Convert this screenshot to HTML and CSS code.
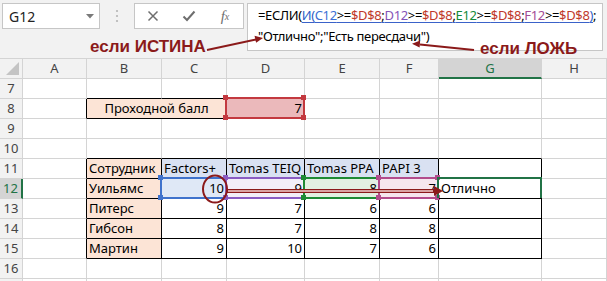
FILE: index.html
```html
<!DOCTYPE html>
<html>
<head>
  <title>ЕСЛИ и И</title>
  <link rel="stylesheet" href="styles.css">
</head>
<body>
  <div class="bar">
    <div class="name-box">
      <span>G12</span>
      <svg width="8" height="5" viewBox="0 0 8 5"><path d="M0 0h8L4 4.5z" fill="#7a7a7a"/></svg>
    </div>
    <div class="dots">
      <svg width="4" height="14" viewBox="0 0 4 14"><circle cx="2" cy="2" r="1.1" fill="#b5b5b5"/><circle cx="2" cy="7" r="1.1" fill="#b5b5b5"/><circle cx="2" cy="12" r="1.1" fill="#b5b5b5"/></svg>
    </div>
    <div class="fx-box">
      <span class="btn"><svg width="12" height="12" viewBox="0 0 12 12"><path d="M1.5 1.5l9 9M10.5 1.5l-9 9" stroke="#6e6e6e" stroke-width="1.5" fill="none"/></svg></span>
      <span class="btn"><svg width="14" height="12" viewBox="0 0 14 12"><path d="M1.5 6.5l3.5 3.5 7.5-8.5" stroke="#6e6e6e" stroke-width="2" fill="none"/></svg></span>
      <span class="btn fx">f<sub>x</sub></span>
    </div>
    <div class="formula">
      <div>=ЕСЛИ(<span class="u"><span class="fb">И(</span><span class="rc">C12</span>&gt;=<span class="rr">$D$8</span>;<span class="rp">D12</span>&gt;=<span class="rr">$D$8</span>;<span class="rg">E12</span>&gt;=<span class="rr">$D$8</span>;<span class="rm">F12</span>&gt;=<span class="rr">$D$8</span><span class="fb">)</span></span>;</div>
      <div>"Отлично";"Есть пересдачи")</div>
    </div>
    <div class="note note-true">если ИСТИНА</div>
    <div class="note note-false">если ЛОЖЬ</div>
  </div>

  <div class="sheet">
    <div class="c ch corner"><svg width="13" height="13" viewBox="0 0 13 13"><path d="M13 0v13H0z" fill="#c4c4c4"/></svg></div>
    <div class="c ch">A</div><div class="c ch">B</div><div class="c ch">C</div><div class="c ch">D</div>
    <div class="c ch">E</div><div class="c ch">F</div><div class="c ch on">G</div><div class="c ch">H</div>

    <div class="c rh">7</div><div class="c"></div><div class="c bk-b"></div><div class="c bk-b"></div><div class="c bk-b"></div>
    <div class="c"></div><div class="c"></div><div class="c"></div><div class="c"></div>

    <div class="c rh">8</div><div class="c bk-r"></div>
    <div class="c bt pe merge">Проходной балл</div>
    <div class="c bt n ref ref-d8">7</div>
    <div class="c"></div><div class="c"></div><div class="c"></div><div class="c"></div>

    <div class="c rh">9</div><div class="c"></div><div class="c"></div><div class="c"></div><div class="c"></div>
    <div class="c"></div><div class="c"></div><div class="c"></div><div class="c"></div>

    <div class="c rh">10</div><div class="c"></div><div class="c bk-b"></div><div class="c bk-b"></div><div class="c bk-b"></div>
    <div class="c bk-b"></div><div class="c bk-b"></div><div class="c bk-b"></div><div class="c"></div>

    <div class="c rh">11</div><div class="c bk-r"></div>
    <div class="c bt pe">Сотрудник</div><div class="c bt hb">Factors+</div><div class="c bt hb">Tomas TEIQ</div>
    <div class="c bt hb">Tomas PPA</div><div class="c bt hb">PAPI 3</div><div class="c bt"></div><div class="c"></div>

    <div class="c rh on">12</div><div class="c bk-r"></div>
    <div class="c bt pe">Уильямс</div>
    <div class="c bt n ref ref-c">10</div>
    <div class="c bt n ref ref-d">9</div>
    <div class="c bt n ref ref-e">8</div>
    <div class="c bt n ref ref-f">7</div>
    <div class="c bt act">Отлично</div><div class="c"></div>

    <div class="c rh">13</div><div class="c bk-r"></div>
    <div class="c bt pe">Питерс</div><div class="c bt n">9</div><div class="c bt n">7</div>
    <div class="c bt n">6</div><div class="c bt n">6</div><div class="c bt"></div><div class="c"></div>

    <div class="c rh">14</div><div class="c bk-r"></div>
    <div class="c bt pe">Гибсон</div><div class="c bt n">8</div><div class="c bt n">7</div>
    <div class="c bt n">8</div><div class="c bt n">8</div><div class="c bt"></div><div class="c"></div>

    <div class="c rh">15</div><div class="c bk-r"></div>
    <div class="c bt pe">Мартин</div><div class="c bt n">9</div><div class="c bt n">10</div>
    <div class="c bt n">7</div><div class="c bt n">6</div><div class="c bt"></div><div class="c"></div>

    <div class="c rh">16</div><div class="c"></div><div class="c"></div><div class="c"></div><div class="c"></div>
    <div class="c"></div><div class="c"></div><div class="c"></div><div class="c"></div>

    <div class="c rh"></div><div class="c"></div><div class="c"></div><div class="c"></div><div class="c"></div>
    <div class="c"></div><div class="c"></div><div class="c"></div><div class="c"></div>
  </div>

  <!-- стрелки и обводка, нарисованные поверх скриншота -->
  <svg class="marks" width="607" height="281" viewBox="0 0 607 281">
    <path d="M207 50L256 39.5" stroke="#8b1a1a" stroke-width="2" fill="none"/>
    <path d="M263 38l-8.5 -2.2 1.6 7z" fill="#8b1a1a"/>
    <path d="M474 50L420 44.5" stroke="#8b1a1a" stroke-width="2" fill="none"/>
    <path d="M412 43.8l8.2 -3.2 -0.6 7z" fill="#8b1a1a"/>
    <rect x="227.5" y="189.5" width="206" height="3" fill="#d9a3a3" stroke="#8b1a1a" stroke-width="1"/>
    <path d="M443 191l-9 -5v10z" fill="#8b1a1a"/>
    <ellipse cx="215" cy="189" rx="12" ry="13.5" stroke="#8b1a1a" stroke-width="2" fill="none"/>
  </svg>
</body>
</html>
```

FILE: styles.css
```css
body {
  margin: 0;
  width: 607px;
  height: 281px;
  overflow: hidden;
  position: relative;
  background-color: #f2f2f2;
  font-family: "Noto Sans", sans-serif;
  color: #000;
}

.bar {
  position: relative;
  height: 58px;
  box-sizing: border-box;
  padding: 3px 0 0 2px;
  display: flex;
  align-items: flex-start;
}

.name-box {
  width: 98px;
  height: 26px;
  box-sizing: border-box;
  border: 1px solid #c6c6c6;
  background-color: #fff;
  display: flex;
  align-items: center;
  justify-content: space-between;
  padding: 0 5px 0 6px;
  font-size: 14px;
  color: #222;
}

.dots {
  width: 34px;
  display: flex;
  justify-content: center;
  padding-top: 6px;
}

.fx-box {
  width: 110px;
  height: 26px;
  box-sizing: border-box;
  border: 1px solid #c6c6c6;
  background-color: #fff;
  display: flex;
}

.btn {
  width: 36px;
  display: flex;
  align-items: center;
  justify-content: center;
}

.fx {
  font-family: "Liberation Serif", serif;
  font-style: italic;
  font-size: 15px;
  color: #6e6e6e;
}

.fx sub {
  font-size: 10px;
  vertical-align: -1px;
}

.formula {
  margin-left: 3px;
  width: 356px;
  height: 48px;
  box-sizing: border-box;
  border: 1px solid #c6c6c6;
  background-color: #fff;
  padding: 1px 0 0 10px;
  font-size: 13px;
  letter-spacing: -0.35px;
  line-height: 21px;
  white-space: nowrap;
  overflow: hidden;
}

.formula .u {
  text-decoration: underline;
  text-decoration-color: #3a62c9;
  text-underline-offset: 2px;
}

.fb { color: #2e5fc7; }
.rc { color: #3b6fd4; }
.rr { color: #c0392b; }
.rp { color: #8453b8; }
.rg { color: #148a3a; }
.rm { color: #a24a95; }

.note {
  position: absolute;
  font-family: "Liberation Sans", Arial, sans-serif;
  font-weight: bold;
  font-size: 17px;
  line-height: 17px;
  color: #8b1a1a;
  white-space: nowrap;
}

.note-true {
  left: 90px;
  top: 38px;
}

.note-false {
  left: 480px;
  top: 40px;
}

.sheet {
  display: grid;
  grid-template-columns: 23px 64px 75px 65px 78px 75px 59px 103px 65px;
  grid-auto-rows: 20px;
  border-top: 1px solid #d4d4d4;
  background-color: #fff;
}

.c {
  box-sizing: border-box;
  border-right: 1px solid #d4d4d4;
  border-bottom: 1px solid #d4d4d4;
  padding: 0 2px;
  font-size: 13px;
  line-height: 19px;
  white-space: nowrap;
}

.ch,
.rh {
  background-color: #f2f2f2;
  color: #444;
  text-align: center;
  padding: 0;
}

.ch.on {
  background-color: #d4d4d4;
  color: #217346;
  border-bottom: 2px solid #217346;
}

.rh.on {
  background-color: #d4d4d4;
  color: #217346;
  border-right: 2px solid #217346;
}

.corner {
  display: flex;
  align-items: flex-end;
  justify-content: flex-end;
  padding: 0 3px 3px 0;
}

.bk-r { border-right-color: #000; }
.bk-b { border-bottom-color: #000; }

.bt {
  border-right-color: #000;
  border-bottom-color: #000;
}

.merge {
  grid-column: span 2;
  text-align: center;
}

.n { text-align: right; }
.pe { background-color: #fce4d6; }
.hb { background-color: #d9e1f2; }

/* подсветка ссылок формулы */
.ref {
  position: relative;
}

.ref::before {
  content: "";
  position: absolute;
  top: -2px;
  left: -2px;
  right: -1px;
  bottom: -1px;
  border: 2px solid var(--rc);
}

.ref::after {
  content: "";
  position: absolute;
  top: -4px;
  left: -4px;
  width: 5px;
  height: 5px;
  background-color: var(--rc);
  box-shadow: var(--w) 0 0 var(--rc), 0 20px 0 var(--rc), var(--w) 20px 0 var(--rc);
}

.ref-d8 { --rc: #c3393f; --w: 78px; background-color: #ebb9bb; }
.ref-c { --rc: #3f72cc; --w: 65px; background-color: #dfe8f6; }
.ref-d { --rc: #8a5cc2; --w: 78px; background-color: #f3eef8; }
.ref-e { --rc: #1f8a35; --w: 75px; background-color: #e3f0e2; }
.ref-f { --rc: #b24c8c; --w: 59px; background-color: #f6e6ee; }

.act {
  position: relative;
}

.act::before {
  content: "";
  position: absolute;
  top: -2px;
  left: -2px;
  right: -1px;
  bottom: 0;
  border: 2px solid #217346;
  border-bottom: none;
}

.marks {
  position: absolute;
  top: 0;
  left: 0;
  pointer-events: none;
}
```
